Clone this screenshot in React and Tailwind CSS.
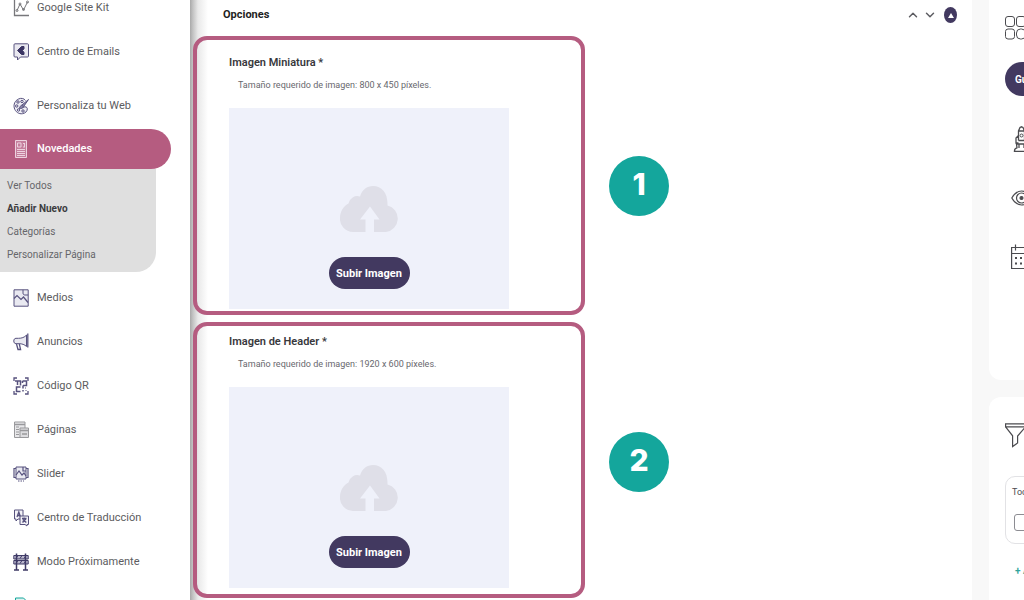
import { ChevronUp, ChevronDown } from "lucide-react";

function Icon({ children, className = "text-[#57527e]", label }) {
  return (
    <svg
      viewBox="0 0 16 18"
      className={`w-4 h-[18px] shrink-0 ${className}`}
      fill="none"
      stroke="currentColor"
      strokeWidth="1"
      aria-label={label}
    >
      {children}
    </svg>
  );
}

const SiteKitIcon = () => (
  <Icon className="text-[#77777b]">
    <path d="M1.5 0v16.5H16" strokeWidth="1.3" />
    <path d="M4 11.5 7 5l3.500 6L14.500 3" />
    <circle cx="4" cy="11.500" r="1" />
    <circle cx="7" cy="5" r="1" />
    <circle cx="10.500" cy="10.500" r="1" />
    <circle cx="14.500" cy="3" r="1" />
  </Icon>
);

const EmailsIcon = () => (
  <Icon>
    <path d="M2 .8h12.500a1 1 0 0 1 1 1V13a1 1 0 0 1-1 1H7.500L4.500 17v-3H2a1 1 0 0 1-1-1V1.800a1 1 0 0 1 1-1Z" fill="#e9e8f0" />
    <path d="M11 3.500v2.200L9.500 7.500 11 9.500v2H8.500L4.500 7.500l4-4Z" fill="#3a3463" stroke="#3a3463" />
  </Icon>
);

const PaletteIcon = () => (
  <Icon>
    <path d="M12.500 3.500C11 1.200 8 .8 5.500 2 2 3.600.3 7.500 1.300 11c1 3.800 4.500 6.300 8.200 5.700 3-.5 5-2.700 4.800-5-.2-1.800-2-2.200-3.300-1.700l-1.500.5" fill="#efeef5" />
    <circle cx="5" cy="5" r="1.200" />
    <circle cx="9" cy="4.500" r="1.200" />
    <circle cx="3.700" cy="9" r="1.200" />
    <circle cx="5.500" cy="13" r="1.200" />
    <circle cx="10" cy="14" r="1.200" />
    <path d="M15.500 2.500 8.800 8.200l1.700 1.500 5-7.200ZM8.800 8.200C7 8.500 7.300 10.500 6 11.200c2 .6 4 .2 4.500-1.500" fill="#8d89ab" />
  </Icon>
);

const NewsIcon = () => (
  <Icon className="text-[#edd2df]">
    <path d="M2.500 .5h11v17h-11Z" fill="#c57f9d" />
    <path d="M4.500 3h3.500v4H4.500ZM10 3.500h2M11.500 3v4M10 7h2M4 9.500H12M4 11.500H12M4 13.500H12M4 15.500H12" />
  </Icon>
);

const MediaIcon = () => (
  <Icon>
    <path d="M1 .8h14.200v16.400H1Z" fill="#e9e9f1" />
    <path d="m1 9.500 3-3 4 4 2.500-2.500 4.500 5.500" strokeWidth="1.200" />
    <path d="M10 .8v3.200c0 1.500 1 2 2 2h3.200" />
  </Icon>
);

const MegaphoneIcon = () => (
  <Icon>
    <path d="M13.500 2v11.500c-2-2-4.500-2.800-7.500-2.800H3C1.500 10.700.8 9.500.8 8s.7-2.700 2.200-2.700h2.500C8.500 5.300 11.500 4.500 13.500 2Z" fill="#e9e9f1" />
    <path d="M14.800 .5v14M3.500 11l1.500 5.500h2.600L6.300 11" strokeWidth="1.300" />
  </Icon>
);

const QrIcon = () => (
  <Icon>
    <path d="M1 4V1h3M12 1h3v3M15 14v3h-3M4 17H1v-3" strokeWidth="1.300" />
    <path d="M2 4h5.500v4.500M4.500 4v4M9.500 4h4v4.500H10M9.500 4v2M7.500 10H3.500v4.500h4M10 8.500v3M10 14.500v-1.500" strokeWidth="1.500" />
    <path d="M12 11h2M12.500 13.500h1" strokeDasharray="1 1" />
  </Icon>
);

const PagesIcon = () => (
  <Icon className="text-[#99999c]">
    <path d="M1.500 1H12v15.500H1.500Z" fill="#e8e8ea" />
    <path d="M1.500 3.500H12" strokeWidth="1.500" />
    <path d="M3 6h3M3 8.500h3M3 11h3M3 13.500h3" />
    <path d="M7 7h8.500v9.500H7Z" fill="#dcdcdf" />
    <path d="M7 9.500h8.500M9 13h5" strokeWidth="1.300" />
  </Icon>
);

const SliderIcon = () => (
  <Icon>
    <path d="M3 2h10v12H3Z" fill="#e9e9f1" />
    <path d="M3 3.500H1v9h2M13 3.500h2v9h-2M3 10l3-4 3 4 2-2 2 3M10 2V6h3" strokeWidth="1.200" />
    <path d="M5 16h6" strokeDasharray="1.500 1" />
  </Icon>
);

const TranslateIcon = () => (
  <Icon>
    <path d="M1.500 1H10v9H5l-2 2v-2H1.500Z" fill="#f3f2f7" />
    <path d="m4 8 1.800-5L7.500 8M4.500 6.500h2.500" strokeWidth="1.300" />
    <path d="M7 7h8.500v8.500H14V17l-2-1.500H7Z" fill="#f3f2f7" />
    <path d="M9 9.500h4.500M11.200 8.500v1M12.800 10 9.500 13.500M9.800 10.500l3.500 3" strokeWidth="1.400" />
  </Icon>
);

const BarrierIcon = () => (
  <Icon className="text-[#3f3a66]">
    <path d="M.8 2.500h14.400v3.500H.8ZM.8 7.500h14.400V11H.8Z" fill="#b9b6cc" />
    <path d="m3 5.500 2-3M7 5.500l2-3M11 5.500l2-3M3 10.500l2-3M7 10.500l2-3M11 10.500l2-3" />
    <path d="M3.500.5v16M12.500.5v16M1 17h5M10 17h5" strokeWidth="1.500" />
  </Icon>
);

const FileIcon = () => (
  <Icon className="text-[#14a69c]">
    <path d="M2.500 1h8l3 3v13h-11Z" fill="#dff3f1" />
  </Icon>
);

const firstItems = [
  { label: "Google Site Kit", icon: SiteKitIcon },
  { label: "Centro de Emails", icon: EmailsIcon },
];

const lastItems = [
  { label: "Medios", icon: MediaIcon },
  { label: "Anuncios", icon: MegaphoneIcon },
  { label: "Código QR", icon: QrIcon },
  { label: "Páginas", icon: PagesIcon },
  { label: "Slider", icon: SliderIcon },
  { label: "Centro de Traducción", icon: TranslateIcon },
  { label: "Modo Próximamente", icon: BarrierIcon },
  { label: "", icon: FileIcon },
];

const subItems = ["Ver Todos", "Añadir Nuevo", "Categorías", "Personalizar Página"];

function NavItem({ item }) {
  return (
    <a href="#" aria-label={item.label || "Archivo"} className="flex h-11 items-center gap-2 pl-[13px] text-[#5c5c60]">
      <item.icon />
      <span>{item.label}</span>
    </a>
  );
}

function Sidebar() {
  return (
    <aside className="w-[190px] shrink-0 overflow-hidden bg-white text-[11px] leading-4">
      <nav className="-mt-[14px]">
        {firstItems.map((item) => (
          <NavItem key={item.label} item={item} />
        ))}
        <div className="pt-2.5">
          <NavItem item={{ label: "Personaliza tu Web", icon: PaletteIcon }} />
        </div>
        <a href="#" className="mt-px mr-[19px] flex h-10 items-center gap-2 rounded-r-[20px] bg-[#b55c80] pl-[13px] font-medium text-white">
          <NewsIcon />
          Novedades
        </a>
        <ul className="mr-[34px] mb-1 flex flex-col gap-[7px] rounded-br-[20px] bg-[#dfdfdf] pt-[9px] pb-[9px] pl-[7px] text-[10px] text-[#66666a]">
          {subItems.map((label) => (
            <li key={label}>
              <a href="#" className={label === "Añadir Nuevo" ? "font-bold text-[#3c3c40]" : ""}>
                {label}
              </a>
            </li>
          ))}
        </ul>
        {lastItems.map((item) => (
          <NavItem key={item.label} item={item} />
        ))}
      </nav>
    </aside>
  );
}

function CloudUpload() {
  return (
    <svg viewBox="0 0 58 46" className="h-[46px] w-[58px]" aria-hidden="true">
      <path
        d="M13 46A13 13 0 0 1 0 32C0 25 4 20 8.500 17.500A9 9 0 0 1 20 10.500C22 4 27 0 33 0c9 0 15 7 14.500 19.500A13.500 13.500 0 0 1 46 46H34V33.500h5.500L30 20.500 20 33.500h5.500V46Z"
        fill="#dfdfe8"
      />
    </svg>
  );
}

function UploadField({ title, hint, className }) {
  return (
    <section className={`w-[392px] rounded-[14px] border-4 border-[#b55c80] pl-8 ${className}`}>
      <h3 className="text-[11px] leading-4 font-semibold text-[#38383c]">{title}</h3>
      <p className="mt-1.5 pl-[9px] text-[9px] leading-4 text-[#68686e]">{hint}</p>
      <div className="mt-[15px] flex h-[201px] w-[280px] flex-col items-center bg-[#eff1fa] pt-[78px]">
        <CloudUpload />
        <button className="mt-[25px] h-8 w-[81px] rounded-full bg-[#423960] pt-0.5 text-[11px] leading-4 font-bold whitespace-nowrap text-white">
          Subir Imagen
        </button>
      </div>
    </section>
  );
}

function StepBadge({ number, className }) {
  return (
    <div className={`flex size-[60px] shrink-0 items-center justify-center rounded-full bg-[#14a69c] pb-1 font-[Inter] text-[30px] leading-8 font-extrabold text-white ${className}`}>
      {number}
    </div>
  );
}

function Options() {
  return (
    <main className="min-w-0 flex-1 bg-white bg-[linear-gradient(to_right,#a9a9a9_0px,#c4c4c4_3px,#e9e9e9_8px,#ffffff_18px)]">
      <header className="flex h-9 items-center justify-between pr-[15px] pb-[6px] pl-[33px]">
        <h2 className="text-[11px] leading-4 font-bold text-[#1f1f23]">Opciones</h2>
        <div className="flex items-center gap-[3px] text-[#5d5d62]">
          <button aria-label="Subir">
            <ChevronUp size={14} strokeWidth={2.5} />
          </button>
          <button aria-label="Bajar">
            <ChevronDown size={14} strokeWidth={2.5} />
          </button>
          <button aria-label="Contraer" className="ml-1 flex h-4 w-[13px] items-center justify-center rounded-[50%] bg-[#423960]">
            <svg viewBox="0 0 6 5" className="h-[5px] w-1.5">
              <path d="m3 0 3 5H0Z" fill="#fff" />
            </svg>
          </button>
        </div>
      </header>
      <div className="flex flex-col gap-[7px] pl-[3px]">
        <div className="flex items-start gap-6">
          <UploadField
            title="Imagen Miniatura *"
            hint="Tamaño requerido de imagen: 800 x 450 píxeles."
            className="pt-[15px] pb-0.5"
          />
          <StepBadge number="1" className="mt-[120px]" />
        </div>
        <div className="flex items-start gap-6">
          <UploadField
            title="Imagen de Header *"
            hint="Tamaño requerido de imagen: 1920 x 600 píxeles."
            className="pt-2 pb-1.5"
          />
          <StepBadge number="2" className="mt-[110px]" />
        </div>
      </div>
    </main>
  );
}

function Tools() {
  return (
    <aside className="ml-[17px] flex w-[35px] shrink-0 flex-col gap-[17px] overflow-hidden">
      <div className="h-[380px] w-60 shrink-0 rounded-bl-xl bg-white pt-4 pl-4 text-[#4b4b4f]">
        <svg viewBox="0 0 36 24" className="h-6 w-9" fill="none" stroke="currentColor">
          <rect x=".5" y=".5" width="9" height="10" rx="2.500" />
          <rect x="11.500" y=".5" width="9" height="10" rx="2.500" />
          <rect x=".5" y="13" width="9" height="10" rx="2.500" />
          <rect x="11.500" y="13" width="9" height="10" rx="4" />
        </svg>
        <button className="mt-[22px] block h-[34px] w-28 rounded-full bg-[#423960] pt-px pl-[10px] text-left text-[10px] leading-4 font-bold text-white">
          Guardar
        </button>
        <div className="flex flex-col pl-1.5">
          <svg viewBox="0 0 26 26" className="mt-[30px] ml-0.5 size-[26px]" fill="none" stroke="currentColor">
            <path d="M5.500 14.500V5L7 1.500 8.500.8l1.500.7L11.500 5v9.500M5.500 5h6M5.500 9.500 3 12v5h2.500M11.500 9.500 14 12v5h-2.500M5.500 14.500h6M.8 25.500h16M1.500 25c0-2 1-3 2.500-3.200L3.500 18h10l-.5 3.800c1.500.2 2.500 1.200 2.500 3.200M6 18v4M11 18v4" strokeWidth="1.300" />
            <circle cx="8.500" cy="9.500" r="1.500" />
          </svg>
          <svg viewBox="0 0 26 16" className="mt-[38px] h-4 w-[26px]" fill="none" stroke="currentColor" strokeWidth="1.200">
            <path d="M.8 8C4 2.500 7 1 10.500 1S18 2.500 21 8c-3 5.500-7 7-10.500 7S4 13.500.8 8Z" />
            <circle cx="10.500" cy="8" r="5" />
            <circle cx="10.500" cy="8" r="1.500" fill="currentColor" />
          </svg>
          <svg viewBox="0 0 26 26" className="mt-[38px] size-[26px]" fill="none" stroke="currentColor" strokeWidth="1.200">
            <path d="M.6 3.500h24v21H.6ZM.6 9.500h24M4.500 .5v6M20.500 .5v6" />
            <path d="M4 14h2M9 14h2M14 14h2M4 19.500h2M9 19.500h2M14 19.500h2" strokeWidth="2" />
          </svg>
        </div>
      </div>
      <div className="h-60 w-60 shrink-0 rounded-tl-xl bg-white pt-[26px] pl-4 text-[#4b4b4f]">
        <svg viewBox="0 0 26 25" className="h-[25px] w-[26px]" fill="none" stroke="currentColor" strokeWidth="1.200">
          <path d="M.6.8h24.500v3H.6ZM.6 3.800l7 9V23.500l5-3.500v-7l8-9.200" />
        </svg>
        <div className="mt-7 h-[68px] w-48 rounded-[10px] border border-[#e2e2e5] pt-[7px] pl-1.5 text-[9px] leading-4">
          <label htmlFor="all">Todas</label>
          <input
            id="all"
            type="checkbox"
            className="mt-[14px] ml-0.5 block size-[17px] appearance-none rounded-[3px] border border-[#8c8c92] bg-white"
          />
        </div>
        <a href="#" className="mt-[19px] block pl-[10px] text-[10px] leading-4 font-semibold text-[#2fa39b]">
          + Añadir
        </a>
      </div>
    </aside>
  );
}

export default function App() {
  return (
    <div className="flex h-screen overflow-hidden bg-[#f8f8f8] font-[Roboto,sans-serif]">
      <Sidebar />
      <Options />
      <Tools />
    </div>
  );
}
